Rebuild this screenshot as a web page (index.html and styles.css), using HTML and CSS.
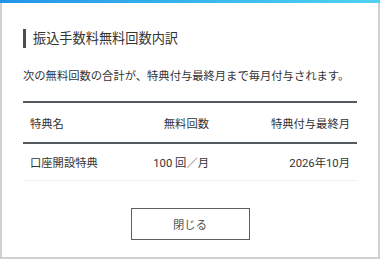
FILE: index.html
```html
<!DOCTYPE html>
<html lang="ja">

<head>
    <meta charset="UTF-8">
    <meta name="viewport" content="width=device-width, initial-scale=1.0">
    <title>振込手数料無料回数内訳</title>
    <link rel="stylesheet" href="styles.css">
</head>

<body>
    <div class="modal">
        <div class="modal-bar"></div>
        <div class="modal-body">
            <h2 class="modal-title">振込手数料無料回数内訳</h2>
            <p class="modal-text">次の無料回数の合計が、特典付与最終月まで毎月付与されます。</p>

            <div class="table">
                <div class="table-row table-head">
                    <div class="cell">特典名</div>
                    <div class="cell num">無料回数</div>
                    <div class="cell num">特典付与最終月</div>
                </div>
                <div class="table-row">
                    <div class="cell">口座開設特典</div>
                    <div class="cell num">100 回／月</div>
                    <div class="cell num">2026年10月</div>
                </div>
            </div>

            <div class="actions">
                <button class="button">閉じる</button>
            </div>
        </div>
    </div>
</body>

</html>
```

FILE: styles.css
```css
body {
    font-family: Roboto, "Noto Sans CJK JP", sans-serif;
    margin: 0;
    background-color: #ffffff;
    color: #333333;
}

.modal {
    width: 380px;
    height: 259px;
    box-sizing: border-box;
    border: 2px solid #d0d0d0;
    border-top: none;
    background: #ffffff;
    position: relative;
}

.modal-bar {
    height: 3px;
    margin: 0 -2px;
    background: linear-gradient(to right, #2196e8, #4fd3f2);
}

.modal-body {
    padding: 26px 21px 0;
}

.modal-title {
    margin: 0;
    border-left: 3px solid #4a4f56;
    padding-left: 7px;
    font-size: 13.2px;
    font-weight: normal;
    line-height: 19px;
    color: #333333;
}

.modal-text {
    margin: 20px 0 0;
    font-size: 11.3px;
    line-height: 17px;
}

/* breakdown table */
.table {
    margin-top: 16px;
    border-top: 2px solid #555a61;
    font-size: 11.3px;
}

.table-row {
    display: grid;
    grid-template-columns: 1fr 100px 141px;
    height: 36px;
    align-items: center;
    border-bottom: 1px solid #eeeeee;
}

.table-head {
    height: 39px;
    border-bottom: 2px solid #555a61;
}

.cell {
    padding: 0 7px;
}

.cell.num {
    text-align: right;
}

.actions {
    display: flex;
    justify-content: center;
    margin-top: 27px;
}

.button {
    width: 119px;
    height: 32px;
    background: #ffffff;
    border: 1px solid #5a5f66;
    font-family: Roboto, "Noto Sans CJK JP", sans-serif;
    font-size: 11.3px;
    color: #555555;
    cursor: pointer;
}
```
